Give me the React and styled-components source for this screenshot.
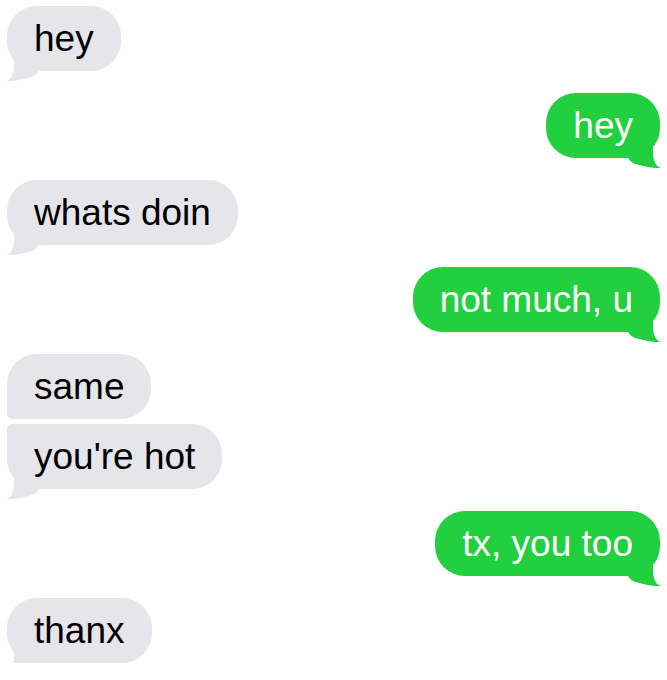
import styled, { createGlobalStyle, css } from "styled-components"

const GRAY = "#e5e5ea"
const GREEN = "#21cf3f"

const messages = [
    { id: 1, text: "hey", fromMe: false },
    { id: 2, text: "hey", fromMe: true },
    { id: 3, text: "whats doin", fromMe: false },
    { id: 4, text: "not much, u", fromMe: true },
    { id: 5, text: "same", fromMe: false },
    { id: 6, text: "you're hot", fromMe: false },
    { id: 7, text: "tx, you too", fromMe: true },
    { id: 8, text: "thanx", fromMe: false },
]

export default function App(){
    return(
        <>
            <GlobalStyle />
            <Thread>
                {messages.map((msg, i) => {
                    const prev = messages[i - 1]
                    const next = messages[i + 1]
                    const joinedTop = prev && prev.fromMe === msg.fromMe
                    const joinedBottom = next && next.fromMe === msg.fromMe
                    return (
                        <Bubble
                            key={msg.id}
                            $fromMe={msg.fromMe}
                            $joinedTop={joinedTop}
                            $joinedBottom={joinedBottom}
                        >
                            {msg.text}
                        </Bubble>
                    )
                })}
            </Thread>
        </>
    )
}

const GlobalStyle = createGlobalStyle`
    body{
        margin: 0;
        background: #FFFFFF;
        font-family: "Liberation Sans", Arial, sans-serif;
        overflow-x: hidden;
    }
`

const Thread = styled.div`
    display: flex;
    flex-direction: column;
    padding: 6px 7px 0;
`

const themTail = css`
    &::before{
        content: "";
        position: absolute;
        left: -2px;
        bottom: -10px;
        width: 34px;
        height: 22px;
        background: ${GRAY};
        border-bottom-right-radius: 34px 11px;
    }
    &::after{
        content: "";
        position: absolute;
        left: -12px;
        bottom: -10px;
        width: 19px;
        height: 22px;
        background: #FFFFFF;
        border-bottom-right-radius: 9px 14px;
    }
`

const meTail = css`
    &::before{
        content: "";
        position: absolute;
        right: -2px;
        bottom: -10px;
        width: 34px;
        height: 22px;
        background: ${GREEN};
        border-bottom-left-radius: 34px 11px;
    }
    &::after{
        content: "";
        position: absolute;
        right: -12px;
        bottom: -10px;
        width: 19px;
        height: 22px;
        background: #FFFFFF;
        border-bottom-left-radius: 9px 14px;
    }
`

const Bubble = styled.p`
    position: relative;
    width: fit-content;
    max-width: 75%;
    margin: ${p => p.$joinedTop ? "5px" : "22px"} 0 0;
    padding: 11px 27px;
    font-size: 37px;
    line-height: 43px;
    border-radius: 30px;
    align-self: ${p => p.$fromMe ? "flex-end" : "flex-start"};
    background: ${p => p.$fromMe ? GREEN : GRAY};
    color: ${p => p.$fromMe ? "#FFFFFF" : "#000000"};
    &:first-child{
        margin-top: 0;
    }
    ${p => p.$joinedTop && (p.$fromMe
        ? "border-top-right-radius: 5px;"
        : "border-top-left-radius: 5px;")}
    ${p => p.$joinedBottom && (p.$fromMe
        ? "border-bottom-right-radius: 5px;"
        : "border-bottom-left-radius: 5px;")}
    ${p => !p.$joinedBottom && (p.$fromMe ? meTail : themTail)}
`
